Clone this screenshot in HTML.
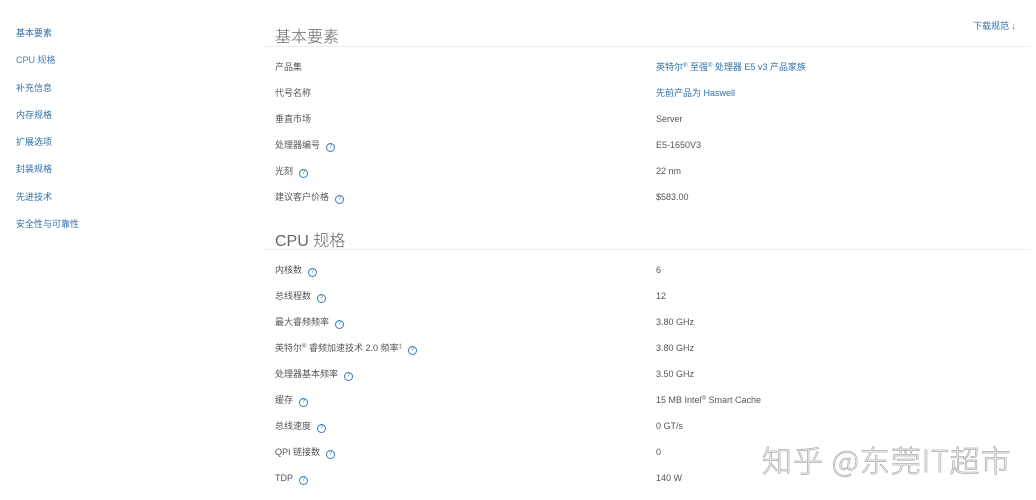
<!DOCTYPE html>
<html><head><meta charset="utf-8"><style>
body{margin:0;width:1036px;height:500px;background:#fff;overflow:hidden;position:relative;font-family:"Liberation Sans","Noto Sans CJK SC",sans-serif;}
.t{position:absolute;white-space:nowrap;font-size:9px;line-height:12px;color:#555;}
.n{color:#2f6fab;}
.h{position:absolute;font-size:16px;color:#666;font-weight:300;white-space:nowrap;}
.line{position:absolute;left:262px;width:768px;height:1px;background:#eee;}
.q{display:inline-block;width:7px;height:7px;border:1px solid #3a7cc0;border-radius:50%;font-size:6px;line-height:7px;text-align:center;color:#3a7cc0;margin-left:6px;vertical-align:0px;}
sup{font-size:6px;vertical-align:3px;line-height:0;}
.wm{position:absolute;left:762px;top:437px;font-size:30px;color:#fff;-webkit-text-stroke:0.8px #b0b0b0;letter-spacing:1px;white-space:nowrap;font-family:"Noto Sans CJK SC",sans-serif;font-weight:300;}
</style></head><body>
<div class="t n" style="left:16px;top:27px">基本要素</div>
<div class="t n" style="left:16px;top:54px;color:#4a80b8">CPU 规格</div>
<div class="t n" style="left:16px;top:82px">补充信息</div>
<div class="t n" style="left:16px;top:109px">内存规格</div>
<div class="t n" style="left:16px;top:136px">扩展选项</div>
<div class="t n" style="left:16px;top:163px">封装规格</div>
<div class="t n" style="left:16px;top:191px">先进技术</div>
<div class="t n" style="left:16px;top:218px">安全性与可靠性</div>

<div class="h" style="left:275px;top:23px">基本要素</div>
<div class="t n" style="left:973px;top:20px">下载规范 ↓</div>
<div class="line" style="top:46px"></div>

<div class="t" style="left:275px;top:61px">产品集</div><div class="t n" style="left:656px;top:61px">英特尔<sup>®</sup> 至强<sup>®</sup> 处理器 E5 v3 产品家族</div>
<div class="t" style="left:275px;top:87px">代号名称</div><div class="t n" style="left:656px;top:87px">先前产品为 Haswell</div>
<div class="t" style="left:275px;top:113px">垂直市场</div><div class="t" style="left:656px;top:113px">Server</div>
<div class="t" style="left:275px;top:139px">处理器编号<span class="q">?</span></div><div class="t" style="left:656px;top:139px">E5-1650V3</div>
<div class="t" style="left:275px;top:165px">光刻<span class="q">?</span></div><div class="t" style="left:656px;top:165px">22 nm</div>
<div class="t" style="left:275px;top:191px">建议客户价格<span class="q">?</span></div><div class="t" style="left:656px;top:191px">$583.00</div>

<div class="h" style="left:275px;top:227px">CPU 规格</div>
<div class="line" style="top:249px"></div>

<div class="t" style="left:275px;top:264px">内核数<span class="q">?</span></div><div class="t" style="left:656px;top:264px">6</div>
<div class="t" style="left:275px;top:290px">总线程数<span class="q">?</span></div><div class="t" style="left:656px;top:290px">12</div>
<div class="t" style="left:275px;top:316px">最大睿频频率<span class="q">?</span></div><div class="t" style="left:656px;top:316px">3.80 GHz</div>
<div class="t" style="left:275px;top:342px">英特尔<sup>®</sup> 睿频加速技术 2.0 频率<sup>‡</sup><span class="q">?</span></div><div class="t" style="left:656px;top:342px">3.80 GHz</div>
<div class="t" style="left:275px;top:368px">处理器基本频率<span class="q">?</span></div><div class="t" style="left:656px;top:368px">3.50 GHz</div>
<div class="t" style="left:275px;top:394px">缓存<span class="q">?</span></div><div class="t" style="left:656px;top:394px">15 MB Intel<sup>®</sup> Smart Cache</div>
<div class="t" style="left:275px;top:420px">总线速度<span class="q">?</span></div><div class="t" style="left:656px;top:420px">0 GT/s</div>
<div class="t" style="left:275px;top:446px">QPI 链接数<span class="q">?</span></div><div class="t" style="left:656px;top:446px">0</div>
<div class="t" style="left:275px;top:472px">TDP<span class="q">?</span></div><div class="t" style="left:656px;top:472px">140 W</div>

<div class="wm">知乎 @东莞IT超市</div>
</body></html>
